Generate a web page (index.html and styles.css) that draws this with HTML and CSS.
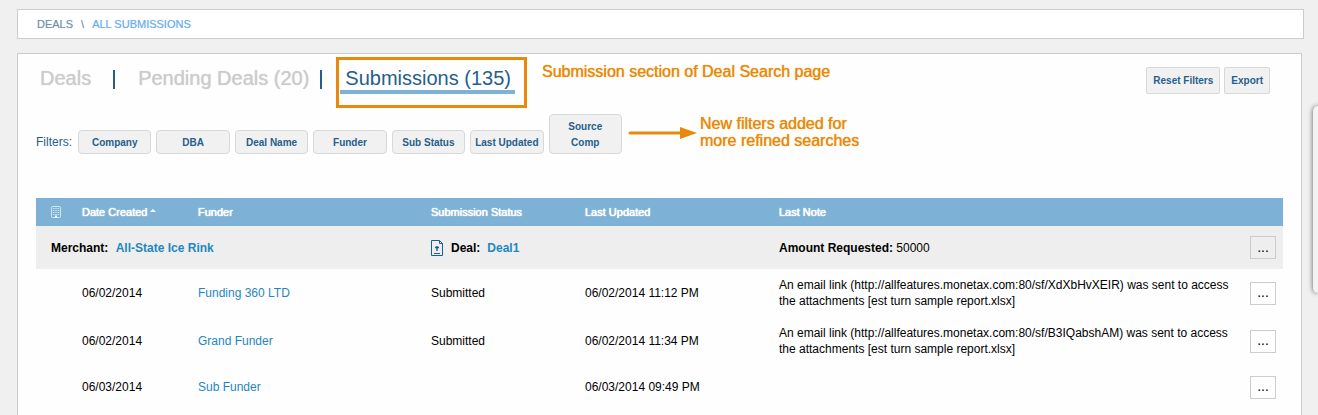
FILE: index.html
```html
<!DOCTYPE html>
<html lang="en">
<head>
    <meta charset="UTF-8">
    <meta name="viewport" content="width=device-width, initial-scale=1.0">
    <title>Deals - All Submissions</title>
    <link rel="stylesheet" href="styles.css">
</head>
<body>
    <nav class="breadcrumb">
        <a href="#">DEALS</a>
        <span class="slash">\</span>
        <a href="#" class="current">ALL SUBMISSIONS</a>
    </nav>

    <main class="panel">
        <div class="top">
            <nav class="tabs">
                <a href="#" class="tab">Deals</a>
                <span class="divider wide"></span>
                <a href="#" class="tab">Pending Deals (20)</a>
                <span class="divider"></span>
                <div class="highlight">
                    <a href="#" class="tab active">Submissions (135)</a>
                </div>
            </nav>
            <p class="note">Submission section of Deal Search page</p>
            <div class="actions">
                <button type="button" class="btn">Reset Filters</button>
                <button type="button" class="btn">Export</button>
            </div>
        </div>

        <div class="filters">
            <span class="filters-label">Filters:</span>
            <div class="filter-list">
                <button type="button" class="filter">Company</button>
                <button type="button" class="filter">DBA</button>
                <button type="button" class="filter">Deal Name</button>
                <button type="button" class="filter">Funder</button>
                <button type="button" class="filter">Sub Status</button>
                <button type="button" class="filter">Last Updated</button>
                <button type="button" class="filter">Source<br>Comp</button>
            </div>
            <svg class="arrow" width="70" height="14" viewBox="0 0 70 14">
                <path d="M2 7H54" stroke="#e8890c" stroke-width="3" stroke-linecap="round"/>
                <path d="M52 1L69 7L52 13Z" fill="#e8890c"/>
            </svg>
            <p class="note">New filters added for<br>more refined searches</p>
        </div>

        <table>
            <colgroup>
                <col class="col-icon">
                <col class="col-date">
                <col class="col-funder">
                <col class="col-status">
                <col class="col-updated">
                <col>
                <col class="col-menu">
            </colgroup>
            <thead>
                <tr>
                    <th class="first">
                        <svg class="building" width="10" height="12" viewBox="0 0 10 12" fill="none" stroke="#d3e6f3">
                            <rect x=".5" y=".5" width="9" height="11" rx="1"/>
                            <path d="M2 2.5H8M2 4.5H8M2 6.5H8M2 8.5H8" stroke-dasharray="1.4 .9"/>
                            <path d="M4 10.5H6" stroke="#fff" stroke-width="2"/>
                        </svg>
                    </th>
                    <th>Date Created <span class="sort"></span></th>
                    <th>Funder</th>
                    <th>Submission Status</th>
                    <th>Last Updated</th>
                    <th>Last Note</th>
                    <th></th>
                </tr>
            </thead>
            <tbody>
                <tr class="group">
                    <td class="first" colspan="3"><b>Merchant:</b> <a href="#">All-State Ice Rink</a></td>
                    <td colspan="2">
                        <div class="deal">
                            <svg width="12" height="16" viewBox="0 0 12 16" fill="none" stroke="#1b5e96">
                                <path d="M.5 .5H8.5L11.5 3.5V15.5H.5Z"/>
                                <path d="M8.5 .5V3.5H11.5M3 13.5H9"/>
                                <path d="M6 11V6M4 7.5H8" stroke-width="1.4"/>
                            </svg>
                            <b>Deal:</b> <a href="#">Deal1</a>
                        </div>
                    </td>
                    <td><b>Amount Requested:</b> 50000</td>
                    <td><button type="button" class="menu" aria-label="Deal actions">...</button></td>
                </tr>
                <tr>
                    <td></td>
                    <td>06/02/2014</td>
                    <td><a href="#">Funding 360 LTD</a></td>
                    <td>Submitted</td>
                    <td>06/02/2014 11:12 PM</td>
                    <td class="last-note">An email link (http://allfeatures.monetax.com:80/sf/XdXbHvXEIR) was sent to access the attachments [est turn sample report.xlsx]</td>
                    <td><button type="button" class="menu" aria-label="Submission actions">...</button></td>
                </tr>
                <tr>
                    <td></td>
                    <td>06/02/2014</td>
                    <td><a href="#">Grand Funder</a></td>
                    <td>Submitted</td>
                    <td>06/02/2014 11:34 PM</td>
                    <td class="last-note">An email link (http://allfeatures.monetax.com:80/sf/B3IQabshAM) was sent to access the attachments [est turn sample report.xlsx]</td>
                    <td><button type="button" class="menu" aria-label="Submission actions">...</button></td>
                </tr>
                <tr>
                    <td></td>
                    <td>06/03/2014</td>
                    <td><a href="#">Sub Funder</a></td>
                    <td></td>
                    <td>06/03/2014 09:49 PM</td>
                    <td class="last-note"></td>
                    <td><button type="button" class="menu" aria-label="Submission actions">...</button></td>
                </tr>
            </tbody>
        </table>
    </main>

    <aside class="drawer"></aside>
</body>
</html>
```
FILE: styles.css
```css
* {
    box-sizing: border-box;
}
body {
    font-family: Arial, "Liberation Sans", sans-serif;
    font-size: 12px;
    line-height: 16px;
    margin: 0;
    padding: 9px 14px 0 17px;
    background-color: #f0f0f0;
    color: #000;
}
a {
    color: #1f87c0;
    text-decoration: none;
}
p {
    margin: 0;
}
button {
    font-family: inherit;
    cursor: pointer;
}
.breadcrumb {
    display: flex;
    align-items: center;
    gap: 8px;
    height: 30px;
    padding: 0 19px;
    border: 1px solid #ccc;
    background: #fff;
    font-size: 11px;
    text-shadow: 0 0 1px #b5cde0;
}
.breadcrumb a {
    color: #7090a8;
}
.breadcrumb a.current {
    color: #6aaef5;
}
.slash {
    color: #7090a8;
}
.panel {
    margin: 14px 2px 0 0;
    padding: 3px 18px 6px;
    border: 1px solid #ccc;
    border-bottom: 0;
    background: #fefefe;
}
.top {
    display: flex;
    align-items: flex-start;
}
.tabs {
    display: flex;
    align-items: flex-start;
    padding-left: 4px;
    font-size: 20px;
    line-height: 24px;
}
.tab {
    padding-top: 9px;
    color: #ccc;
    text-shadow: 0 0 1px #ccc;
}
.tab.active {
    display: block;
    padding: 6px 4px 0 5px;
    border-bottom: 4px solid #7db1d5;
    color: #265f8c;
    text-shadow: none;
}
.highlight {
    margin-left: 14px;
    height: 51px;
    padding: 0 9px 0 1px;
    border: 3px solid #e8890c;
}
.divider {
    width: 2px;
    height: 19px;
    margin: 13px 0 0 11px;
    background: #265f8c;
}
.divider.wide {
    margin: 13px 23px 0 22px;
}
.note {
    color: #e8890c;
    font-size: 16px;
    line-height: 17px;
    text-shadow: 0 0 1px #e8890c;
}
.top .note {
    padding: 6px 0 0 15px;
}
.actions {
    display: flex;
    gap: 4px;
    margin-left: auto;
    padding: 10px 13px 0 0;
}
.btn,
.filter {
    border: 1px solid #d8d8d8;
    background: #f1f1f1;
    color: #265f8c;
    font-size: 10px;
    font-weight: bold;
    line-height: 16px;
}
.btn {
    height: 27px;
    padding: 0 6px;
    border-radius: 2px;
}
.filters {
    display: flex;
    align-items: flex-end;
    margin-top: 6px;
}
.filters-label {
    width: 42px;
    padding-bottom: 4px;
    color: #265f8c;
}
.filter-list {
    display: grid;
    grid-template-columns: repeat(7, 1fr);
    align-items: end;
    gap: 5px;
    width: 544px;
}
.filter {
    padding: 4px 0 2px;
    border-radius: 4px;
    white-space: nowrap;
}
.arrow {
    margin: 0 2px 14px 6px;
}
.filters .note {
    padding-bottom: 5px;
}
table {
    width: 100%;
    margin-top: 44px;
    border-collapse: collapse;
    table-layout: fixed;
}
.col-icon {
    width: 46px;
}
.col-date {
    width: 116px;
}
.col-funder {
    width: 233px;
}
.col-status {
    width: 154px;
}
.col-updated {
    width: 194px;
}
.col-menu {
    width: 33px;
}
th {
    height: 28px;
    padding: 0;
    background: #7db1d5;
    color: #fff;
    font-size: 11px;
    font-weight: normal;
    text-align: left;
    text-shadow: 0 0 1px #fff, 0 0 1px #fff;
}
td {
    height: 44px;
    padding: 8px 0;
}
td:last-child {
    padding: 0;
}
td.last-note {
    padding-right: 14px;
}
.first {
    padding-left: 15px;
}
.building,
.menu {
    display: block;
}
.sort {
    display: inline-block;
    margin-bottom: 4px;
    border: 3px solid transparent;
    border-top: 0;
    border-bottom-color: #fff;
}
.group td {
    height: 43px;
    background: #eee;
}
.group a {
    margin-left: 4px;
    font-weight: bold;
}
.deal {
    display: flex;
    align-items: center;
}
.deal b {
    margin: 0 3px 0 8px;
}
.menu {
    width: 26px;
    height: 23px;
    padding: 0 0 2px;
    border: 1px solid #ccc;
    background: transparent;
    color: #000;
    font-size: 14px;
    line-height: 16px;
}
/* edge of the collapsed side drawer */
.drawer {
    position: absolute;
    top: 106px;
    right: 0;
    width: 5px;
    height: 187px;
    border-radius: 5px 0 0 5px;
    background: #f3f3f3;
    box-shadow: 0 0 5px #555;
}
```
